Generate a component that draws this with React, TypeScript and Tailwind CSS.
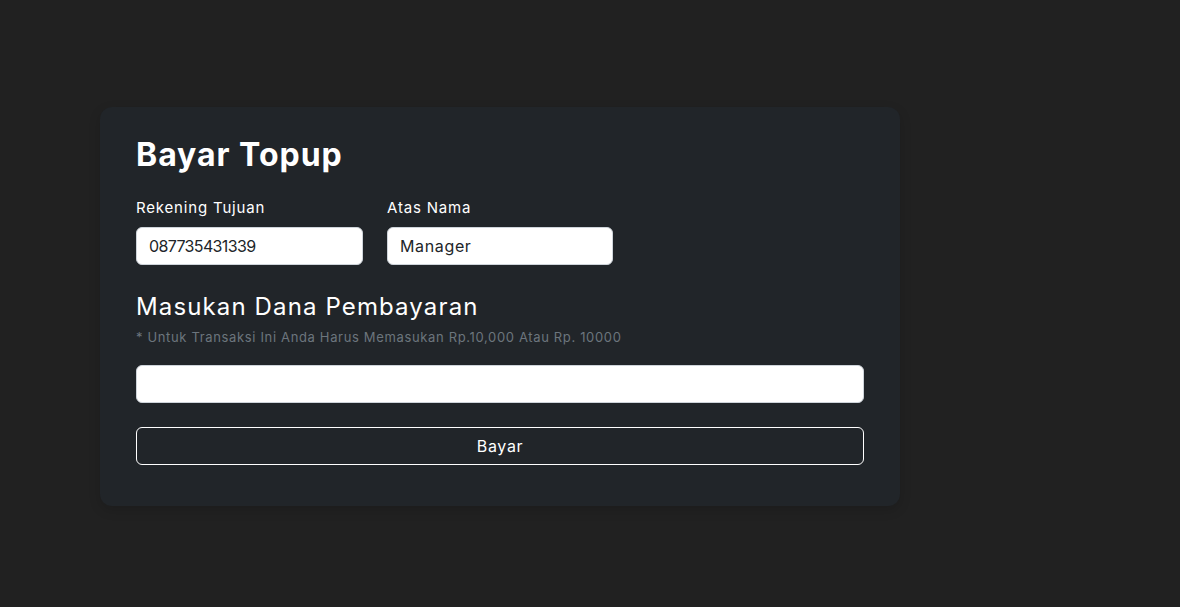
export default function App() {
    return (
        <div
            className="min-h-[607px] bg-[#212121] pl-[100px] pt-[107px]"
            style={{ fontFamily: "Inter, 'Noto Sans', sans-serif" }}
        >
            <div className="w-[800px] rounded-xl bg-[#212529] px-9 pb-[41px] pt-[29px] shadow-[0_4px_12px_rgba(0,0,0,0.15)]">
                <h1 className="text-[32px] font-bold leading-[38px] tracking-[0.03em] text-white">Bayar Topup</h1>

                <div className="mt-[23px] flex gap-6">
                    <div className="w-[227px]">
                        <label className="block text-[15px] leading-[22px] tracking-[0.055em] text-white">Rekening Tujuan</label>
                        <input
                            readOnly
                            value="087735431339"
                            className="mt-[8px] h-[38px] w-full rounded-md border border-[#ced4da] bg-white px-3 text-[16px] tracking-[-0.04em] text-[#212529] outline-none"
                        />
                    </div>
                    <div className="w-[226px]">
                        <label className="block text-[15px] leading-[22px] tracking-[0.055em] text-white">Atas Nama</label>
                        <input
                            readOnly
                            value="Manager"
                            className="mt-[8px] h-[38px] w-full rounded-md border border-[#ced4da] bg-white px-3 text-[16px] tracking-[0.04em] text-[#212529] outline-none"
                        />
                    </div>
                </div>

                <h2 className="mt-[27px] text-[24px] leading-[30px] tracking-[0.047em] text-white">Masukan Dana Pembayaran</h2>
                <p className="mt-[5px] text-[13px] leading-[20px] tracking-[0.05em] text-[#6c757d]">
                    * Untuk Transaksi Ini Anda Harus Memasukan Rp.10,000 Atau Rp. 10000
                </p>

                <input className="mt-[18px] block h-[38px] w-full rounded-md border border-[#ced4da] bg-white px-3 text-[16px] outline-none" />

                <button className="mt-6 block h-[38px] w-full rounded-md border border-white text-[16px] tracking-[0.04em] text-white">
                    Bayar
                </button>
            </div>
        </div>
    );
}
